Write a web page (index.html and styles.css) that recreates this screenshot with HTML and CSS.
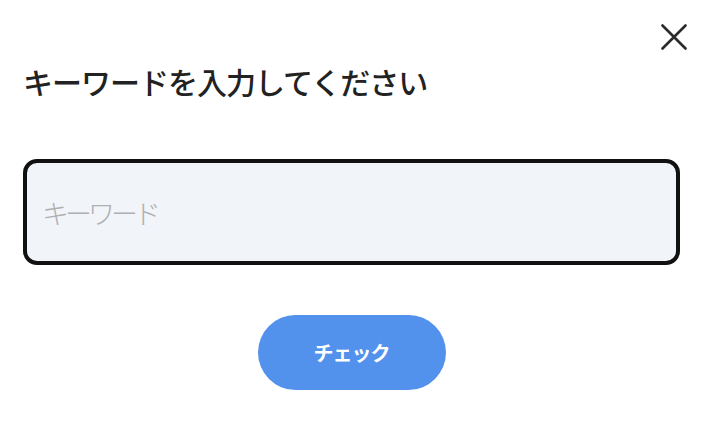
FILE: index.html
```html
<!DOCTYPE html>
<html lang="ja">
<head>
  <meta charset="UTF-8">
  <meta name="viewport" content="width=device-width, initial-scale=1.0">
  <title>キーワード</title>
  <link rel="stylesheet" href="styles.css">
</head>
<body>
  <div class="dialog">
    <button class="close" type="button" aria-label="閉じる">
      <svg width="26" height="26" viewBox="0 0 26 26">
        <path d="M1.5 1.5 L24.5 24.5 M24.5 1.5 L1.5 24.5" stroke="#2b2b2b" stroke-width="2.6" stroke-linecap="round"/>
      </svg>
    </button>
    <h1>キーワードを入力してください</h1>
    <form class="keyword-form">
      <input type="text" class="keyword" placeholder="キーワード">
      <button type="submit" class="check">チェック</button>
    </form>
  </div>
</body>
</html>
```

FILE: styles.css
```css
body {
  margin: 0;
  padding: 0;
  background-color: #fff;
  font-family: "Noto Sans CJK JP", "Noto Sans", sans-serif;
}

.dialog {
  position: relative;
  padding: 61px 27px 0 23px;
}

.close {
  position: absolute;
  top: 24px;
  right: 20px;
  padding: 0;
  border: none;
  background: none;
  cursor: pointer;
  line-height: 0;
}

h1 {
  margin: 0;
  font-size: 30px;
  line-height: 40px;
  font-weight: 500;
  letter-spacing: -1px;
  color: #222;
}

.keyword-form {
  display: flex;
  flex-direction: column;
  align-items: center;
  margin-top: 58px;
}

.keyword {
  box-sizing: border-box;
  width: 100%;
  height: 106px;
  padding: 0 15px;
  border: 4px solid #111;
  border-radius: 14px;
  background-color: #f1f4f9;
  font-family: inherit;
  font-size: 27px;
  font-weight: 300;
  letter-spacing: -4px;
  color: #333;
  outline: none;
}

.keyword::placeholder {
  color: #b0b0b0;
}

.check {
  margin-top: 50px;
  width: 188px;
  height: 75px;
  border: none;
  border-radius: 38px;
  background-color: #5291ec;
  color: #fff;
  font-family: inherit;
  font-size: 20px;
  font-weight: 700;
  letter-spacing: -1px;
  cursor: pointer;
}
```
